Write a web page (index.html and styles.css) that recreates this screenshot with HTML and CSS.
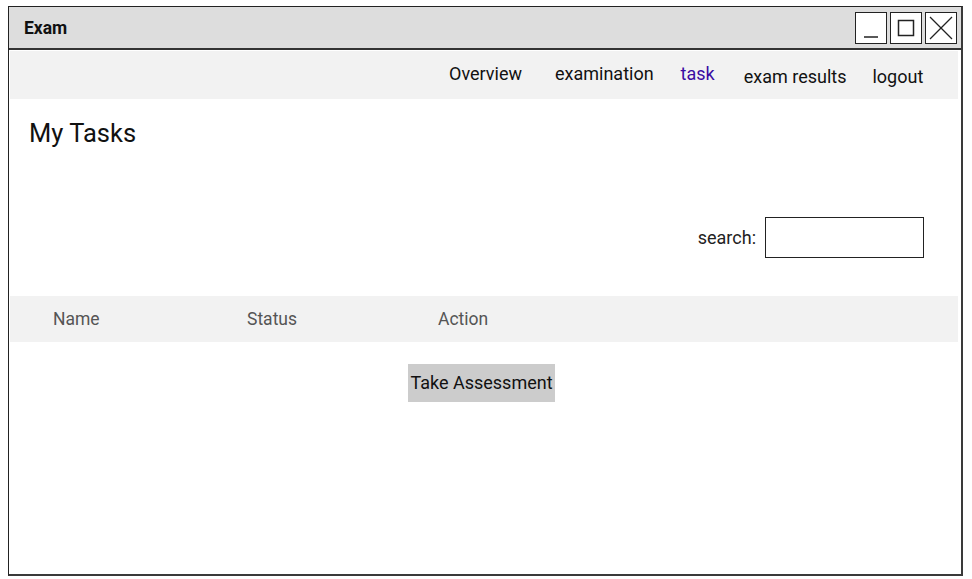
FILE: index.html
```html
<!DOCTYPE html>
<html>
<head>
<meta charset="utf-8">
<link rel="stylesheet" href="styles.css">
</head>
<body>
<div class="window">
  <div class="titlebar">
    <span class="title">Exam</span>
    <div class="winbtns">
      <div class="wbtn"><svg width="30" height="30" viewBox="0 0 30 30"><line x1="8" y1="24" x2="22" y2="24" stroke="#222" stroke-width="1.5"/></svg></div>
      <div class="wbtn"><svg width="30" height="30" viewBox="0 0 30 30"><rect x="7.5" y="7.5" width="15" height="15" fill="none" stroke="#222" stroke-width="1.5"/></svg></div>
      <div class="wbtn"><svg width="30" height="30" viewBox="0 0 30 30"><line x1="4" y1="4" x2="26" y2="26" stroke="#222" stroke-width="1.3"/><line x1="26" y1="4" x2="4" y2="26" stroke="#222" stroke-width="1.3"/></svg></div>
    </div>
  </div>
  <div class="content">
    <nav class="navbar">
      <a class="nav-item n1">Overview</a>
      <a class="nav-item n2">examination</a>
      <a class="nav-item n3 active">task</a>
      <a class="nav-item n4">exam results</a>
      <a class="nav-item n5">logout</a>
    </nav>
    <h1 class="heading">My Tasks</h1>
    <div class="search-row">
      <label class="search-label">search:</label>
      <div class="search-box"></div>
    </div>
    <div class="table-head">
      <span class="col c-name">Name</span>
      <span class="col c-status">Status</span>
      <span class="col c-action">Action</span>
    </div>
    <div class="table-row">
      <div class="btn">Take Assessment</div>
    </div>
  </div>
</div>
</body>
</html>
```
FILE: styles.css
```css
html, body {
  margin: 0;
  padding: 0;
  background: #ffffff;
}
body {
  font-family: Roboto, "Liberation Sans", Arial, sans-serif;
  color: #111;
}
.window {
  margin: 6px 0 0 8px;
  width: 955px;
  height: 570px;
  box-sizing: border-box;
  border: 1.5px solid #222;
  border-right: 2.5px solid #3a3a3a;
  border-bottom: 2.5px solid #3a3a3a;
  display: flex;
  flex-direction: column;
  background: #fff;
}
.titlebar {
  height: 41px;
  background: #dddddd;
  border-bottom: 2px solid #333;
  display: flex;
  align-items: center;
  justify-content: space-between;
  padding: 0 4px 0 15px;
  flex-shrink: 0;
}
.title {
  font-weight: 700;
  font-size: 17.5px;
  color: #111;
}
.winbtns {
  display: flex;
  gap: 3px;
  margin-top: 1px;
}
.wbtn {
  width: 30px;
  height: 30px;
  border: 1.5px solid #222;
  background: #fff;
  display: flex;
}
.content {
  flex: 1;
  padding: 1px 3px 0 1px;
  display: flex;
  flex-direction: column;
}
.navbar {
  height: 48px;
  background: #f2f2f2;
  display: flex;
  align-items: center;
  padding-left: 439px;
}
.nav-item {
  font-size: 18px;
  color: #111;
  white-space: nowrap;
}
.n1 { margin-top: -4px; }
.n2 { margin-left: 33px; margin-top: -3px; }
.n3 { margin-left: 27px; margin-top: -4px; }
.n4 { margin-left: 29px; margin-top: 2px; }
.n5 { margin-left: 26px; margin-top: 2px; }
.nav-item.active { color: #3a0ca3; }
.heading {
  margin: 19px 0 0 19px;
  font-size: 25.5px;
  font-weight: 400;
  color: #111;
  line-height: 30px;
}
.search-row {
  display: flex;
  justify-content: flex-end;
  align-items: center;
  margin-top: 69px;
  padding-right: 34px;
  gap: 9px;
}
.search-label {
  font-size: 18px;
  color: #222;
}
.search-box {
  width: 157px;
  height: 39px;
  border: 1.5px solid #222;
  background: #fff;
}
.table-head {
  margin-top: 38px;
  height: 46px;
  background: #f2f2f2;
  display: flex;
  align-items: center;
  font-size: 17.5px;
  color: #555;
}
.c-name { margin-left: 43px; width: 194px; }
.c-status { width: 191px; }
.table-row {
  padding: 22px 0 0 398px;
}
.btn {
  display: inline-block;
  box-sizing: border-box;
  background: #cccccc;
  font-size: 18px;
  color: #111;
  height: 38px;
  line-height: 38px;
  width: 147px;
  text-align: center;
  white-space: nowrap;
}
```
